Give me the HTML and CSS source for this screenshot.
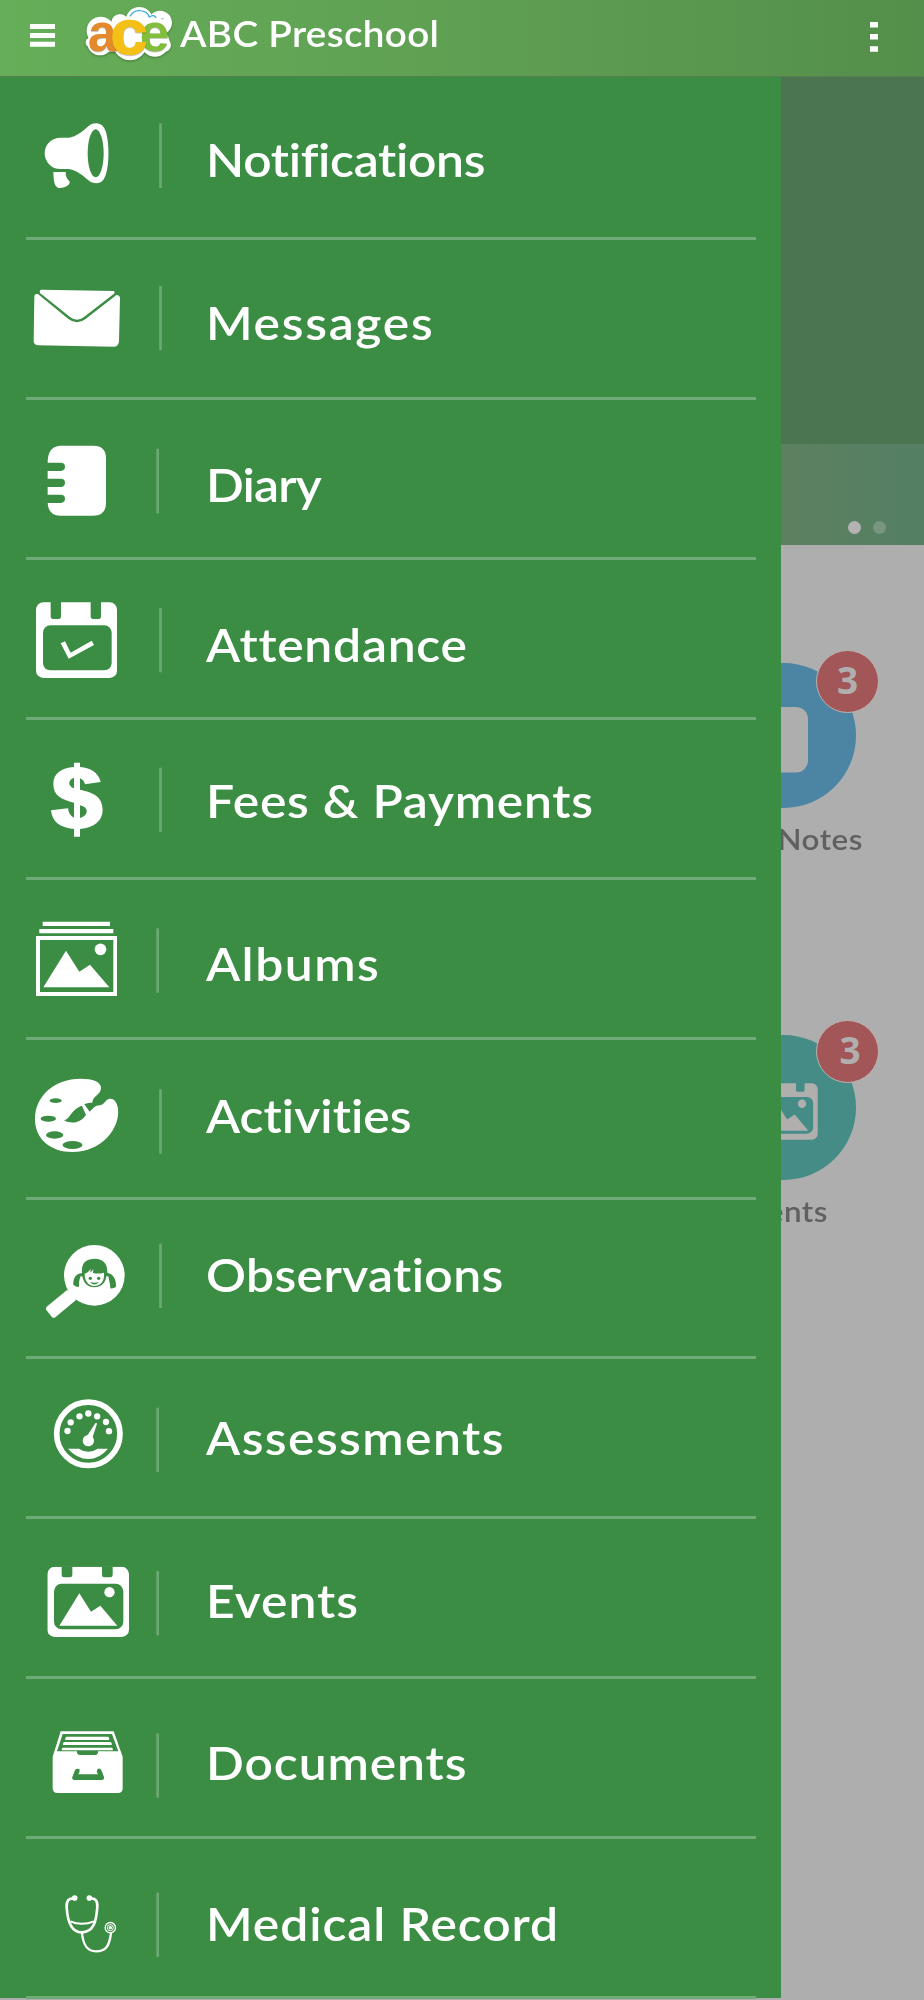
FILE: index.html
```html
<!DOCTYPE html>
<html lang="en">
<head>
<meta charset="utf-8">
<title>ABC Preschool</title>
<link rel="stylesheet" href="styles.css">
</head>
<body>
<svg class="defs" width="0" height="0">
  <symbol id="event" viewBox="142 619 246 211">
    <rect x="142" y="619.500" width="245" height="210.500" rx="22" fill="currentColor"/>
    <path class="hole" d="M185 616h32v28q0 7-7 7h-18q-7 0-7-7zM306 616h32v28q0 7-7 7h-18q-7 0-7-7z"/>
    <rect class="hole" x="162" y="670" width="208" height="137" rx="23"/>
    <path fill="currentColor" d="M178 796L238 699L273 754L301 736L352 796z"/>
    <circle fill="currentColor" cx="328.500" cy="695.500" r="15.500"/>
  </symbol>
</svg>
<div class="screen">
  <header class="topbar">
    <svg class="burger" viewBox="0 0 25 23"><path d="M0 0h25v5H0zM0 9h25v5H0zM0 17.700h25v5H0z"/></svg>
    <svg class="logo" viewBox="255 15 265 170">
      <g class="cloud">
        <circle cx="302" cy="92" r="42"/><circle cx="300" cy="128" r="38"/><circle cx="271" cy="128" r="14"/><circle cx="360" cy="68" r="26"/>
        <circle cx="418" cy="62" r="41"/><circle cx="480" cy="68" r="36"/><circle cx="390" cy="130" r="51"/>
        <circle cx="465" cy="127" r="43"/><circle cx="492" cy="135" r="21"/><rect x="300" y="65" width="190" height="90"/>
      </g>
      <path d="M390 49Q402 29 421 32Q442 34 448 51Q462 41 469 54" fill="none" stroke="#32a9df" stroke-width="4"/>
      <path d="M484 56h7" stroke="#557ca7" stroke-width="2"/>
      <text class="letter letter-a" x="264" y="153" textLength="86" lengthAdjust="spacingAndGlyphs">a</text>
      <text class="letter letter-e" x="419" y="153" textLength="89" lengthAdjust="spacingAndGlyphs">e</text>
      <text class="letter letter-c" x="331" y="162" textLength="112" lengthAdjust="spacingAndGlyphs">c</text>
    </svg>
    <h1 class="title">ABC Preschool</h1>
    <svg class="kebab" viewBox="0 0 8 30"><path d="M0 0h8v5.500H0zM0 12h8v5.500H0zM0 24.200h8v5.500H0z"/></svg>
  </header>

  <main class="home">
    <section class="banner">
      <div class="caption"><i class="dot on"></i><i class="dot"></i></div>
    </section>
    <section class="tiles">
      <article class="tile notes">
        <div class="disc"><svg class="book" viewBox="0 0 54 66"><rect width="54" height="65.500" rx="12"/></svg><b class="badge">3</b></div>
        <p class="name">Notes</p>
      </article>
      <article class="tile events">
        <div class="disc"><svg class="cal"><use href="#event"/></svg><b class="badge">3</b></div>
        <p class="name">Events</p>
      </article>
    </section>
  </main>

  <nav class="drawer">
    <a class="item notifications">
      <svg class="icon" viewBox="0 0 500 480">
        <path d="M181 173H207C232 169 250 151 267 137C276 129 300 124 312 143C330 169 330 270 312 296C304 312 281 313 268 303C249 287 230 270 205 267H181A47 47 0 0 1 181 173z"/>
        <ellipse class="hole" cx="287" cy="220" rx="24" ry="72"/>
        <path d="M160 276H197C197 293 202 296 209 305C209 311 207 314 201 318C192 323 181 325 174 323C162 318 161 300 160 276z"/>
        <path class="sep" d="M481.500 130V324"/>
      </svg><span class="label">Notifications</span></a>
    <a class="item messages">
      <svg class="icon" viewBox="0 0 500 480">
        <path d="M109 162Q116 161 121 164H341Q347 164 354 166Q360 168 360 175L357 304Q356 319 343 320L115 316Q101 315 101 303L103 170Q103 163 109 162z"/>
        <path class="flap" d="M124 148L339 152Q349 154 343 162L253 232Q231 249 209 232L121 160Q115 151 124 148z"/>
        <path d="M124 149L339 153Q347 154 342 161L252 231Q231 247 210 231L121 160Q116 151 124 149z"/>
        <path class="sep" d="M481.500 138V331"/>
      </svg><span class="label">Messages</span></a>
    <a class="item diary">
      <svg class="icon" viewBox="0 -1 500 480">
        <path d="M181 136H280Q318 136 318 174V308Q318 346 280 346H181Q145 346 143 308H182Q195 307 195 295.500Q195 283 182 283H143V260H182Q195 259 195 247Q195 235 182 235H143V212H182Q195 211 195 199.500Q195 187 182 187H143Q143 138 181 136z"/>
        <path class="sep" d="M473 145V339"/>
      </svg><span class="label">Diary</span></a>
    <a class="item attendance">
      <svg class="icon" viewBox="0 -1 500 480">
        <rect x="108" y="129" width="243" height="227" rx="22"/>
        <path class="hole" d="M152 125h31v46q0 8-7 8h-17q-7 0-7-8zM272 125h31v46q0 8-7 8h-17q-7 0-7-8z"/>
        <rect class="hole" x="129" y="198" width="206" height="135" rx="22"/>
        <path d="M182 252L195 246L212 280L275 244L282 257L206 298z"/>
        <path class="sep" d="M481.500 146V339"/>
      </svg><span class="label">Attendance</span></a>
    <a class="item fees">
      <svg class="icon" viewBox="0 -2 500 480">
        <path d="M222 129H240V142Q292 146 302 187L255 194Q252 181 240 176V210C280 219 308 230 308 271C308 302 283 325 240 328V351H222V328C179 324 157 308 153 272L204 266Q207 288 222 294V249C184 240 160 228 160 193C160 162 184 144 222 142zM222 174C203 181 203 199 222 206zM240 257V295C267 288 267 262 240 257z" fill-rule="evenodd"/>
        <path class="sep" d="M481.500 144V337"/>
      </svg><span class="label">Fees &amp; Payments</span></a>
    <a class="item albums">
      <svg class="icon" viewBox="0 -2 500 480">
        <path d="M128 126H330V139H128zM118 148H340V161H118z"/>
        <path d="M108 169H351V349H108zM120 181V337H340V181z" fill-rule="evenodd"/>
        <path d="M130 323L198 213L238 276L270 255L328 323z"/><circle cx="301.500" cy="209" r="17.500"/>
        <path class="sep" d="M473 146V339"/>
      </svg><span class="label">Albums</span></a>
    <a class="item activities">
      <svg class="icon" viewBox="0 -2 500 480">
        <path d="M241 117C279 117 303 126 303 145C303 166 278 167 277 189C265 189 257 191 253 194L269 216C277 208 284 200 290 198C305 198 310 194 319 182C332 171 350 178 354 207C361 265 305 337 217 337C151 337 105 298 105 238C105 167 166 117 241 117z"/>
        <path class="hole" d="M246 198L258 226C240 251 214 254 192 242C211 238 212 210 246 198z"/>
        <g class="hole"><ellipse cx="167" cy="183" rx="18" ry="7"/><ellipse cx="145" cy="237" rx="23" ry="9"/><ellipse cx="164" cy="286" rx="26" ry="11"/><ellipse cx="217.500" cy="316" rx="30" ry="12"/></g>
        <path class="sep" d="M481.500 149V342"/>
      </svg><span class="label">Activities</span></a>
    <a class="item observations">
      <svg class="icon" viewBox="0 -3 500 480">
        <circle cx="283" cy="226" r="91"/>
        <path d="M202 269L140 320Q136 324 139 330L155 350Q160 356 166 352L229 299z"/>
        <path class="hole" d="M246 219C243 187 260 176 284 176C310 176 323 192 322 218C342 223 349 240 348 260Q342 266 331 265C330 250 327 241 325 229H319C316 252 302 262 283 262C263 262 251 249 247 229H242C237 240 237 250 237 261Q226 261 220 254C219 233 228 221 246 219z"/>
        <path d="M254 221C264 219 267 212 273 207L270 218Q276 215 280 206L279 219Q295 223 312 218C314 242 304 258 283 258C264 258 253 240 254 221z"/>
        <circle class="hole" cx="271" cy="235" r="5"/><circle class="hole" cx="296" cy="235" r="5"/><path class="hole" d="M270 246Q283 250 297 246Q283 261 270 246z"/>
        <path class="sep" d="M481.500 131V324"/>
      </svg><span class="label">Observations</span></a>
    <a class="item assessments">
      <svg class="icon" viewBox="0 -3 500 480">
        <circle cx="265" cy="221.500" r="95" fill="none" stroke="currentColor" stroke-width="17"/>
        <circle cx="202.500" cy="213" r="9.500"/><circle cx="212" cy="187" r="9.500"/><circle cx="238.500" cy="169" r="9.500"/><circle cx="265" cy="160.500" r="9.500"/><circle cx="291.500" cy="169" r="9.500"/><circle cx="318" cy="186" r="9.500"/><circle cx="327" cy="213.500" r="9.500"/>
        <circle cx="265" cy="242" r="17"/><path d="M261 228L286 190Q290 187 291 191L277 234z"/>
        <path d="M204 266H237Q265 285 293 266H324Q298 297 265 297Q231 297 204 266z"/>
        <path class="sep" d="M473 143V336"/>
      </svg><span class="label">Assessments</span></a>
    <a class="item events-link">
      <svg class="icon" viewBox="0 -4 500 480">
        <use href="#event" x="142" y="139" width="246" height="211"/>
        <path class="sep" d="M473 152V345"/>
      </svg><span class="label">Events</span></a>
    <a class="item documents">
      <svg class="icon" viewBox="0 -4 500 480">
        <path d="M182 153H341L368 229V324Q368 338 354 338H173Q158 338 158 324V229z"/>
        <path class="hole" d="M188 161H336L355 213H171z"/>
        <path d="M199 169H325Q330 174 327 179H196Q193 174 199 169zM192 185H332Q338 190 335 194H189Q187 189 192 185zM188 202H336Q341 205 338 210H186Q183 206 188 202z"/>
        <path class="hole" d="M231 212H294V217Q292 224 286 224H239Q232 223 231 217zM225 270Q229 263 239 267Q240 273 235 282H294Q288 275 292 267Q300 261 305 271L312 290Q313 299 306 299H223Q215 299 217 290z"/>
        <path class="sep" d="M473 159V352"/>
      </svg><span class="label">Documents</span></a>
    <a class="item medical">
      <svg class="icon" viewBox="0 -4 500 480">
        <g fill="none" stroke="currentColor" stroke-width="6">
          <path stroke-width="8" d="M221 177C207 177 199 183 200 203C202 238 209 279 245 279C284 279 289 240 292 203C293 183 286 177 270 177"/>
          <path d="M211 246Q245 261 282 246"/><path stroke-width="7" d="M246 281C250 322 264 336 288 336C317 336 328 322 333 281"/>
          <circle cx="331" cy="265" r="15.500" stroke-width="4"/><circle cx="331" cy="265" r="9" stroke-width="3"/>
        </g>
        <circle cx="224" cy="176" r="8.500"/><circle cx="268" cy="176" r="8.500"/><circle cx="331" cy="265" r="5"/>
        <path class="sep" d="M473 160V353"/>
      </svg><span class="label">Medical Record</span></a>
  </nav>
</div>
</body>
</html>
```
FILE: styles.css
```css
* { box-sizing: border-box; }
body { margin: 0; font-family: Lato, "Open Sans", sans-serif; }
.defs { position: absolute; }
.screen { position: relative; width: 924px; height: 2000px; overflow: hidden; background: #aeaeae; }

.topbar { display: flex; align-items: flex-start; height: 77px; padding-left: 30px; color: #fff; fill: #fff; background: linear-gradient(90deg, #66ae58, #5f9f53 50%, #548f4b); border-bottom: 1px solid #5a7d52; }
.burger { width: 25px; height: 23px; margin-top: 24px; }
.logo { width: 88.300px; height: 56.700px; margin: 5px 0 0 30px; overflow: visible; filter: drop-shadow(0 1px 1px rgba(40, 70, 30, .5)); }
.letter { font: bold 162px/1 "Liberation Sans", sans-serif; filter: drop-shadow(0 2px 2px rgba(0, 0, 0, .3)); }
.letter-a { fill: #e48a2c; }
.letter-e { fill: #82bd3c; }
.letter-c { fill: #f4c016; stroke: #f4c016; font-size: 190px; stroke-width: 4; }
.title { flex: 1; margin: 11px 0 0 7px; font-size: 37px; line-height: 44px; font-weight: 600; letter-spacing: .3px; white-space: nowrap; transform: scaleX(1.045); transform-origin: 0 0; }
.kebab { width: 8px; height: 30px; margin: 21.500px 46.500px 0 0; }

.banner { display: flex; align-items: flex-end; height: 468px; background: #4b7550; }
.caption { display: flex; flex: 1; justify-content: flex-end; align-items: flex-end; gap: 12px; height: 101px; padding: 0 38px 11px 0; background: linear-gradient(90deg, #5d8060 84%, #547f64); }
.dot { width: 13px; height: 13px; border-radius: 50%; background: #789680; }
.dot.on { background: #b3b3b3; }

.tiles { display: flex; flex-direction: column; align-items: flex-end; gap: 180px; padding: 118px 0 0; }
.tile { width: 280px; height: 192px; }
.disc { position: relative; display: flex; align-items: center; width: 145px; height: 145px; margin-left: 67px; border-radius: 50%; color: #b0afae; }
.notes .disc { background: #4b85a3; }
.events .disc { background: #458c87; --hole: #458c87; }
.book { width: 54px; height: 66px; margin: 8px 0 0 43px; fill: #aeaeae; }
.cal { width: 66px; height: 57px; margin: 8px 0 0 41px; }
.badge { position: absolute; left: 105px; top: -13px; width: 63px; height: 63px; border: 1px solid #bdb3b1; border-radius: 50%; background: #a25657; font: 700 37px/58px "Noto Sans", sans-serif; text-align: center; }
.events .badge { top: -15px; padding-left: 5px; }
.name { margin: 13px 0 0; font-size: 29px; line-height: 36px; font-weight: 600; letter-spacing: .5px; color: #606060; text-align: right; transform: scaleX(1.08); }
.notes .name { margin-right: 61px; transform-origin: 100% 0; }
.events .name { margin-right: 96px; transform-origin: 100% 0; }

.drawer { position: absolute; left: 0; top: 77px; width: 781px; height: 1921px; padding-top: 3.500px; color: #fff; fill: #fff; background: #3b8d44; --hole: #3b8d44; }
.hole { fill: var(--hole); }
.flap { fill: var(--hole); stroke: var(--hole); stroke-width: 12; }
.item { display: flex; align-items: flex-start; height: 159.870px; margin: 0 25px 0 26px; border-bottom: 3px solid #70aa76; }
.icon { flex: none; width: 166.667px; height: 160px; margin: -.6px 0 0 -26px; overflow: visible; }
.sep { stroke: #6da973; stroke-width: 8; }
.label { margin-left: 39px; font-size: 47px; line-height: 60px; font-weight: 600; white-space: nowrap; transform: scaleX(1.06); transform-origin: 0 0; }
.notifications .label { margin-top: 48.500px; letter-spacing: -.3px; }
.messages .label { margin-top: 51.500px; letter-spacing: 1.600px; }
.diary .label { margin-top: 53.500px; letter-spacing: -.8px; }
.attendance .label { margin-top: 53.500px; letter-spacing: .7px; }
.fees .label { margin-top: 49.800px; letter-spacing: .7px; }
.albums .label { margin-top: 52.800px; letter-spacing: 1.400px; }
.activities .label { margin-top: 45.200px; letter-spacing: .05px; }
.observations .label { margin-top: 44px; letter-spacing: .35px; }
.assessments .label { margin-top: 48px; letter-spacing: 1.360px; }
.events-link .label { margin-top: 51px; letter-spacing: .950px; }
.documents .label { margin-top: 53px; letter-spacing: .850px; }
.medical .label { margin-top: 54px; letter-spacing: .860px; }
```
